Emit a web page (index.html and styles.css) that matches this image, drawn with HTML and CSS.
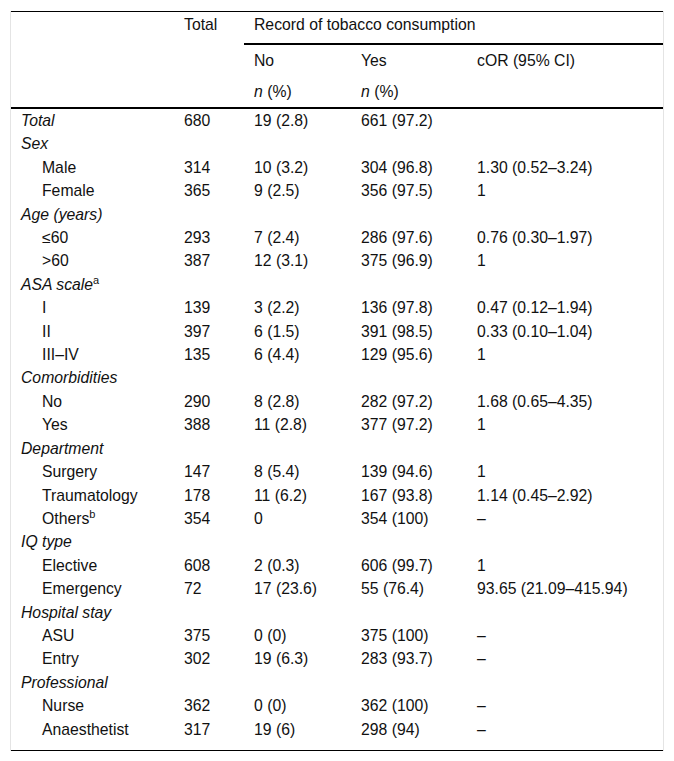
FILE: index.html
```html
<!DOCTYPE html>
<html lang="en">
<head>
<meta charset="utf-8">
<title>Record of tobacco consumption</title>
<link rel="stylesheet" href="styles.css">
</head>
<body>
<div class="wrap">
<table class="tbl">
  <colgroup>
    <col class="c1"><col class="c2"><col class="c3"><col class="c4"><col class="c5">
  </colgroup>
  <thead>
    <tr class="h1">
      <th></th>
      <th>Total</th>
      <th colspan="3" class="span">Record of tobacco consumption</th>
    </tr>
    <tr class="h2">
      <th></th><th></th><th>No</th><th>Yes</th><th>cOR (95% CI)</th>
    </tr>
    <tr class="h3">
      <th></th><th></th><th><i>n</i> (%)</th><th><i>n</i> (%)</th><th></th>
    </tr>
  </thead>
  <tbody>
    <tr><td class="grp">Total</td><td>680</td><td>19 (2.8)</td><td>661 (97.2)</td><td></td></tr>
    <tr><td class="grp">Sex</td><td></td><td></td><td></td><td></td></tr>
    <tr><td class="sub">Male</td><td>314</td><td>10 (3.2)</td><td>304 (96.8)</td><td>1.30 (0.52–3.24)</td></tr>
    <tr><td class="sub">Female</td><td>365</td><td>9 (2.5)</td><td>356 (97.5)</td><td>1</td></tr>
    <tr><td class="grp">Age (years)</td><td></td><td></td><td></td><td></td></tr>
    <tr><td class="sub">≤60</td><td>293</td><td>7 (2.4)</td><td>286 (97.6)</td><td>0.76 (0.30–1.97)</td></tr>
    <tr><td class="sub">&gt;60</td><td>387</td><td>12 (3.1)</td><td>375 (96.9)</td><td>1</td></tr>
    <tr><td class="grp">ASA scale<sup>a</sup></td><td></td><td></td><td></td><td></td></tr>
    <tr><td class="sub">I</td><td>139</td><td>3 (2.2)</td><td>136 (97.8)</td><td>0.47 (0.12–1.94)</td></tr>
    <tr><td class="sub">II</td><td>397</td><td>6 (1.5)</td><td>391 (98.5)</td><td>0.33 (0.10–1.04)</td></tr>
    <tr><td class="sub">III–IV</td><td>135</td><td>6 (4.4)</td><td>129 (95.6)</td><td>1</td></tr>
    <tr><td class="grp">Comorbidities</td><td></td><td></td><td></td><td></td></tr>
    <tr><td class="sub">No</td><td>290</td><td>8 (2.8)</td><td>282 (97.2)</td><td>1.68 (0.65–4.35)</td></tr>
    <tr><td class="sub">Yes</td><td>388</td><td>11 (2.8)</td><td>377 (97.2)</td><td>1</td></tr>
    <tr><td class="grp">Department</td><td></td><td></td><td></td><td></td></tr>
    <tr><td class="sub">Surgery</td><td>147</td><td>8 (5.4)</td><td>139 (94.6)</td><td>1</td></tr>
    <tr><td class="sub">Traumatology</td><td>178</td><td>11 (6.2)</td><td>167 (93.8)</td><td>1.14 (0.45–2.92)</td></tr>
    <tr><td class="sub">Others<sup>b</sup></td><td>354</td><td>0</td><td>354 (100)</td><td>–</td></tr>
    <tr><td class="grp">IQ type</td><td></td><td></td><td></td><td></td></tr>
    <tr><td class="sub">Elective</td><td>608</td><td>2 (0.3)</td><td>606 (99.7)</td><td>1</td></tr>
    <tr><td class="sub">Emergency</td><td>72</td><td>17 (23.6)</td><td>55 (76.4)</td><td>93.65 (21.09–415.94)</td></tr>
    <tr><td class="grp">Hospital stay</td><td></td><td></td><td></td><td></td></tr>
    <tr><td class="sub">ASU</td><td>375</td><td>0 (0)</td><td>375 (100)</td><td>–</td></tr>
    <tr><td class="sub">Entry</td><td>302</td><td>19 (6.3)</td><td>283 (93.7)</td><td>–</td></tr>
    <tr><td class="grp">Professional</td><td></td><td></td><td></td><td></td></tr>
    <tr><td class="sub">Nurse</td><td>362</td><td>0 (0)</td><td>362 (100)</td><td>–</td></tr>
    <tr class="last"><td class="sub">Anaesthetist</td><td>317</td><td>19 (6)</td><td>298 (94)</td><td>–</td></tr>
  </tbody>
</table>
</div>
</body>
</html>
```

FILE: styles.css
```css
html, body {
  margin: 0;
  padding: 0;
  background: #ffffff;
}
body {
  padding: 11px 10px 0 10px;
  font-family: "Liberation Sans", Arial, sans-serif;
  font-size: 15.75px;
  color: #111111;
}
.wrap {
  width: 652px;
  border-left: 1px solid #e4e4e4;
  border-right: 1px solid #e4e4e4;
}
.tbl {
  width: 652px;
  border-collapse: collapse;
  table-layout: fixed;
  border-top: 1px solid #000;
  border-bottom: 1px solid #000;
}
.c1 { width: 163px; }
.c2 { width: 70px; }
.c3 { width: 107px; }
.c4 { width: 116px; }
.c5 { width: 196px; }
.tbl th {
  font-weight: normal;
  text-align: left;
  vertical-align: top;
  padding: 8px 10px 7px 10px;
  line-height: 16px;
}
.tbl .h1 th { padding-top: 5px; padding-bottom: 10px; }
.tbl .h1 .span { border-bottom: 2px solid #000; }
.tbl .h3 th { border-bottom: 2px solid #000; }
.tbl td {
  padding: 4px 10px 4px 10px;
  line-height: 15.4px;
  white-space: nowrap;
}
.tbl td.grp { font-style: italic; }
.tbl td.sub { padding-left: 31px; }
.tbl .last td { padding-bottom: 13px; }
sup {
  font-size: 11px;
  line-height: 0;
  vertical-align: 6px;
  font-style: normal;
}
i { font-style: italic; }
```
